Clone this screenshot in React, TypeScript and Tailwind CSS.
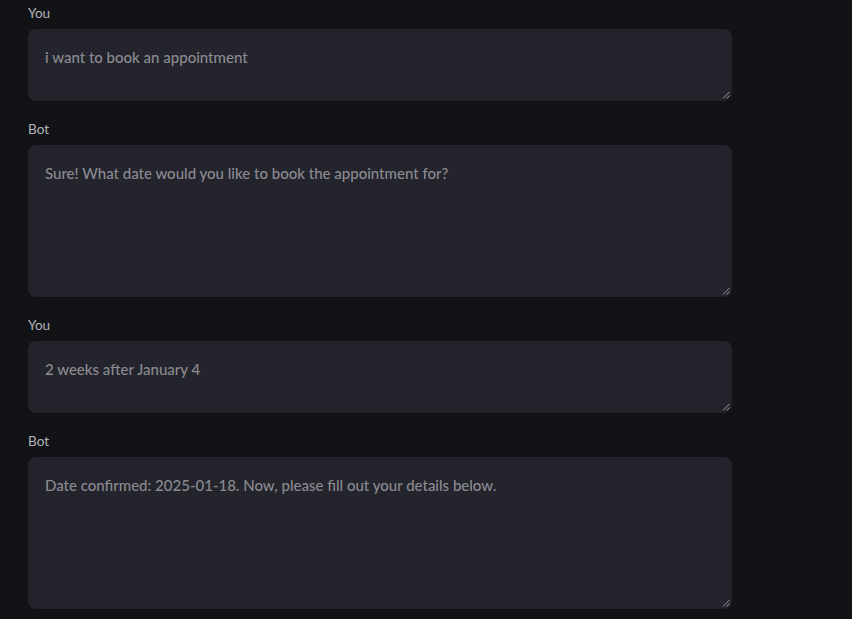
import React from "react";

const items = [
  { label: "You", text: "i want to book an appointment", h: 72 },
  { label: "Bot", text: "Sure! What date would you like to book the appointment for?", h: 152 },
  { label: "You", text: "2 weeks after January 4", h: 72 },
  { label: "Bot", text: "Date confirmed: 2025-01-18. Now, please fill out your details below.", h: 152 },
];

function Grip() {
  return (
    <svg className="absolute right-[2px] bottom-[2px]" width="8" height="8" viewBox="0 0 8 8">
      <line x1="1" y1="7.5" x2="7.5" y2="1" stroke="#9a9aa0" strokeWidth="1" />
      <line x1="4.5" y1="7.5" x2="7.5" y2="4.5" stroke="#9a9aa0" strokeWidth="1" />
    </svg>
  );
}

export default function App() {
  return (
    <div
      className="w-[852px] h-[619px] overflow-hidden bg-[#111317] pt-px"
      style={{ fontFamily: "'Source Sans Pro', Lato, 'Noto Sans', sans-serif" }}
    >
      <div className="ml-[28px] w-[704px] flex flex-col gap-4">
        {items.map((it, i) => (
          <div key={i} className="flex flex-col">
            <div className="text-[13.5px] leading-5 pt-[2px] pb-[6px] text-[#b4b4b8]">{it.label}</div>
            <div
              className="relative rounded-lg bg-[#23242c] px-[17px] pt-[16px] text-[15px] font-medium leading-[25.6px] text-[#8b8b91]"
              style={{ height: it.h }}
            >
              {it.text}
              <Grip />
            </div>
          </div>
        ))}
      </div>
    </div>
  );
}
